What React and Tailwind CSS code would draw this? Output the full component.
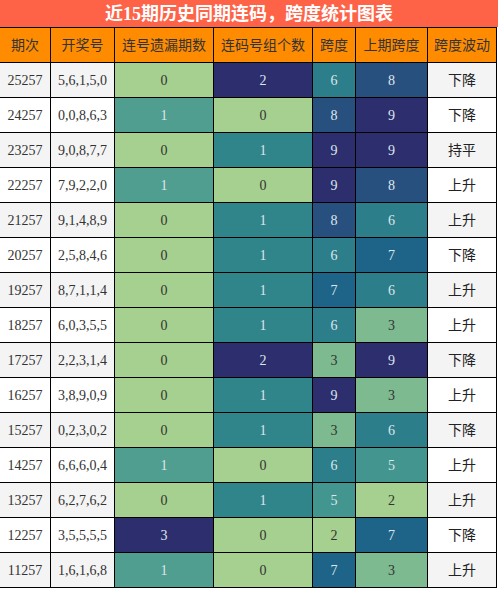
import React from 'react'

const rows = [
  ['25257', '5,6,1,5,0', 0, 2, 6, 8, '下降'],
  ['24257', '0,0,8,6,3', 1, 0, 8, 9, '下降'],
  ['23257', '9,0,8,7,7', 0, 1, 9, 9, '持平'],
  ['22257', '7,9,2,2,0', 1, 0, 9, 8, '上升'],
  ['21257', '9,1,4,8,9', 0, 1, 8, 6, '上升'],
  ['20257', '2,5,8,4,6', 0, 1, 6, 7, '下降'],
  ['19257', '8,7,1,1,4', 0, 1, 7, 6, '上升'],
  ['18257', '6,0,3,5,5', 0, 1, 6, 3, '上升'],
  ['17257', '2,2,3,1,4', 0, 2, 3, 9, '下降'],
  ['16257', '3,8,9,0,9', 0, 1, 9, 3, '上升'],
  ['15257', '0,2,3,0,2', 0, 1, 3, 6, '下降'],
  ['14257', '6,6,6,0,4', 1, 0, 6, 5, '上升'],
  ['13257', '6,2,7,6,2', 0, 1, 5, 2, '上升'],
  ['12257', '3,5,5,5,5', 3, 0, 2, 7, '下降'],
  ['11257', '1,6,1,6,8', 1, 0, 7, 3, '上升'],
]

const headers = ['期次', '开奖号', '连号遗漏期数', '连码号组个数', '跨度', '上期跨度', '跨度波动']

const LIGHT = 'bg-[#a6d08f] text-[#333]'

const missColor = {
  0: LIGHT,
  1: 'bg-[#4f9e8f] text-[#dfe6ea]',
  3: 'bg-[#2c2e6e] text-[#dfe6ea]',
}
const groupColor = {
  0: LIGHT,
  1: 'bg-[#30858b] text-[#dfe6ea]',
  2: 'bg-[#2c2e6e] text-[#dfe6ea]',
}
const spanColor = {
  2: LIGHT,
  3: 'bg-[#7dba8f] text-[#333]',
  5: 'bg-[#42968f] text-[#dfe6ea]',
  6: 'bg-[#2c7e8b] text-[#dfe6ea]',
  7: 'bg-[#1e6488] text-[#dfe6ea]',
  8: 'bg-[#27507f] text-[#dfe6ea]',
  9: 'bg-[#2c2e6e] text-[#dfe6ea]',
}

const Cell = ({ className, children }) => (
  <div className={'flex items-center justify-center h-[34px] ' + className}>{children}</div>
)

export default function App() {
  return (
    <div className="w-[498px] bg-white text-[14px] font-['Liberation_Serif','Noto_Sans_CJK_SC',serif]">
      <div className="h-[27px] bg-[#ff6347] text-white font-bold text-[18px] flex items-center justify-center leading-none">
        近15期历史同期连码，跨度统计图表
      </div>
      <div className="w-[497px] grid grid-cols-[50px_63px_98px_98px_42px_71px_68px] gap-px bg-black pt-px pr-px pb-px">
        {headers.map(h => (
          <div key={h} className="h-[34px] bg-[#ff8c00] text-[#333] flex items-center justify-center">
            {h}
          </div>
        ))}
        {rows.map((r, i) => {
          const bg = i % 2 === 0 ? 'bg-[#f4f4f4]' : 'bg-white'
          return (
            <React.Fragment key={r[0]}>
              <Cell className={bg + ' text-[#333]'}>{r[0]}</Cell>
              <Cell className={bg + ' text-[#333]'}>{r[1]}</Cell>
              <Cell className={missColor[r[2]]}>{r[2]}</Cell>
              <Cell className={groupColor[r[3]]}>{r[3]}</Cell>
              <Cell className={spanColor[r[4]]}>{r[4]}</Cell>
              <Cell className={spanColor[r[5]]}>{r[5]}</Cell>
              <Cell className={bg + ' text-[#222]'}>{r[6]}</Cell>
            </React.Fragment>
          )
        })}
      </div>
    </div>
  )
}
